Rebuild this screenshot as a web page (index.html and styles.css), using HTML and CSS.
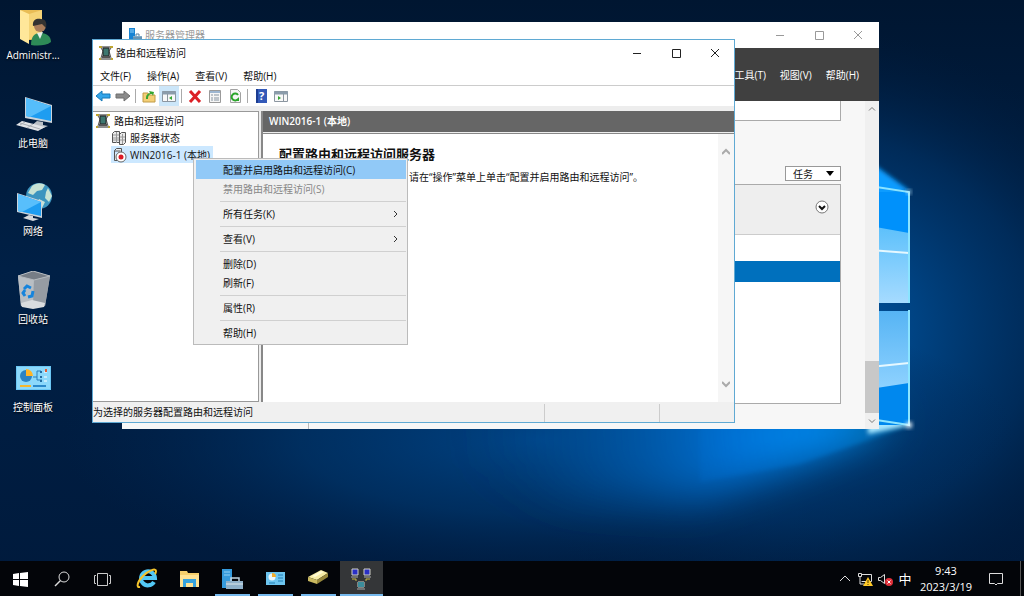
FILE: index.html
```html
<!DOCTYPE html>
<html lang="zh-CN">
<head>
  <meta charset="utf-8">
  <title>路由和远程访问</title>
  <link rel="stylesheet" href="styles.css">
</head>
<body>
  <svg class="wallpaper" viewBox="0 0 1024 596" preserveAspectRatio="xMidYMid slice" aria-hidden="true">
    <defs>
      <linearGradient id="sky" x1="0" y1="0" x2="0" y2="1">
        <stop offset="0" stop-color="#001631"/>
        <stop offset=".45" stop-color="#002046"/>
        <stop offset="1" stop-color="#001a3c"/>
      </linearGradient>
      <radialGradient id="glow" gradientUnits="userSpaceOnUse" cx="800" cy="330" r="360" gradientTransform="translate(0 50) scale(1 .84)">
        <stop offset="0" stop-color="#005cae"/>
        <stop offset=".35" stop-color="#00417f"/>
        <stop offset=".65" stop-color="#003062" stop-opacity=".75"/>
        <stop offset="1" stop-color="#001c3e" stop-opacity="0"/>
      </radialGradient>
      <radialGradient id="haze" cx=".5" cy=".5" r=".5">
        <stop offset="0" stop-color="#00478c" stop-opacity=".9"/>
        <stop offset=".5" stop-color="#003870" stop-opacity=".65"/>
        <stop offset="1" stop-color="#002450" stop-opacity="0"/>
      </radialGradient>
      <radialGradient id="beam" gradientUnits="userSpaceOnUse" cx="905" cy="424" r="440">
        <stop offset="0" stop-color="#10b4ff"/>
        <stop offset=".16" stop-color="#0092fa"/>
        <stop offset=".4" stop-color="#0078e0" stop-opacity=".85"/>
        <stop offset=".7" stop-color="#005cae" stop-opacity=".5"/>
        <stop offset="1" stop-color="#00407c" stop-opacity="0"/>
      </radialGradient>
      <linearGradient id="paneTop" x1="0" y1="0" x2="0" y2="1">
        <stop offset="0" stop-color="#5cc0fb"/>
        <stop offset="1" stop-color="#a6dbff"/>
      </linearGradient>
      <linearGradient id="paneLow" x1="0" y1="0" x2="0" y2="1">
        <stop offset="0" stop-color="#56b4f4"/>
        <stop offset="1" stop-color="#8fd2ff"/>
      </linearGradient>
      <filter id="soft" x="-20%" y="-40%" width="140%" height="180%"><feGaussianBlur stdDeviation="20"/></filter>
      <filter id="fine" x="-50%" y="-50%" width="200%" height="200%"><feGaussianBlur stdDeviation="2"/></filter>
    </defs>
    <rect width="1024" height="596" fill="url(#sky)"/>
    <rect width="1024" height="596" fill="url(#glow)"/>
    <ellipse cx="540" cy="440" rx="480" ry="150" fill="url(#haze)"/>
    <path d="M895 420L800 462L700 500L560 500L420 440L440 400L640 380Z" fill="url(#beam)" filter="url(#soft)"/>
    <path d="M912 425L800 464L700 482L700 415Z" fill="url(#beam)" filter="url(#fine)" opacity=".3"/>
    <path d="M910 191L868 160V202Z" fill="#0a9cff" filter="url(#fine)"/>
    <path d="M911 425L868 434V414Z" fill="#a6e6ff" filter="url(#fine)"/>
    <path d="M870 192H909V303H870Z" fill="#0091fb"/>
    <path d="M870 226L909 233V303H870Z" fill="url(#paneTop)"/>
    <path d="M870 250L909 253" stroke="#e6f8ff" stroke-width="2"/>
    <path d="M870 311H909V425H870Z" fill="#0088ee"/>
    <path d="M870 311H909V383L870 389Z" fill="url(#paneLow)"/>
    <path d="M870 367L909 363" stroke="#e6f8ff" stroke-width="2"/>
    <path d="M870 186L909 192V303M909 310V425L870 419" fill="none" stroke="#8be4ff" stroke-width="2"/>
    <circle cx="909" cy="192" r="2" fill="#dff8ff" filter="url(#fine)"/>
    <circle cx="909" cy="425" r="3" fill="#fff" filter="url(#fine)"/>
  </svg>

  <main class="desktop">
    <nav class="shortcuts">
      <a class="shortcut" href="#admin">
        <svg viewBox="0 0 40 40">
          <path d="M7 3h22v30H12z" fill="#e9bd55"/><path d="M7 3l9 4v30l-9-5z" fill="#ffe79a"/><path d="M16 7l13-4v29H16z" fill="#f5d477"/>
          <path d="M18 38c0-8 3-12 9-12s11 3 11 9c-5 4-14 4-20 3z" fill="#2e8b57"/><path d="M24 26l3 6 3-7z" fill="#e6efe9"/>
          <circle cx="27" cy="19" r="6" fill="#a97d5b"/><path d="M20 19c-1-7 5-8 8-7 5 0 6 4 5 9l-4-4z" fill="#343331"/>
        </svg>
        <span>Administr...</span>
      </a>
      <a class="shortcut" href="#computer">
        <svg viewBox="0 0 40 40">
          <path d="M12 2l27 8v18l-27-5z" fill="#cbd3da"/><path d="M13 3l25 8v15l-25-5z" fill="#1e9df1"/><path d="M13 3l25 8-21 11-4-1z" fill="#55bdfb"/>
          <path d="M24 26l6 1v3l5 1-7 3-10-3z" fill="#b9bfc5"/><path d="M9 26l23 6-7 4-22-6z" fill="#e1e4e7"/><path d="M7 28l20 6M12 27l-5 3M20 29l-6 4" stroke="#a9aeb3"/>
        </svg>
        <span>此电脑</span>
      </a>
      <a class="shortcut" href="#network">
        <svg viewBox="0 0 40 40">
          <circle cx="26" cy="13" r="13" fill="#3c94bf"/><path d="M19 3c5-4 10-3 13-1l-3 5-5 1-4 4-5-2zM35 5l4 8-3 6-4-4 1-6zM26 16l6 3-3 6-6-2z" fill="#c8e3d5"/>
          <path d="M4 10l25 8v17L4 29z" fill="#cbd3da"/><path d="M5 11l23 8v14L5 28z" fill="#1e9df1"/><path d="M5 11l23 8L9 29l-4-1z" fill="#58bffc"/>
          <path d="M16 32l4 1v2l6 1-6 2-10-3z" fill="#d5d8db"/>
        </svg>
        <span>网络</span>
      </a>
      <a class="shortcut" href="#bin">
        <svg viewBox="0 0 40 40">
          <path d="M5 5L20 0l17 5-5 30-12 2-12-2z" fill="#a7adb3"/><path d="M5 5l16 4-1 28-12-2z" fill="#b9bec3"/><path d="M37 5L21 9l-1 28 12-2z" fill="#969ca3"/>
          <path d="M5 5l15-5 17 5-16 4z" fill="#767d86" stroke="#b5babf"/><path d="M8 32l11-3 13 3-1 4-11 2-11-2z" fill="#dadddf"/>
          <path d="M11 18l3-3 4 2M20 20l-1 5-4 1M12 25l-2-3 2-3" fill="none" stroke="#1684dc" stroke-width="3"/>
        </svg>
        <span>回收站</span>
      </a>
      <a class="shortcut" href="#control">
        <svg viewBox="0 0 40 40">
          <path d="M3 7h35v24H3z" fill="#6bc7f5"/><path d="M4 8h33v22H4z" fill="#8cd9fb"/><circle cx="13" cy="17" r="6" fill="#2b83c4"/>
          <path d="M13 17v-7a7 7 0 0 1 7 7z" fill="#ffb527"/><path d="M20 18h4v-6h4M24 18v3h5" fill="none" stroke="#2b7fb8"/>
          <path d="M27 12h2v2h-2zM27 17h2v2h-2zM27 21h2v2h-2z" fill="#236da2"/><path d="M31 13h3M31 18h3M31 22h3" stroke="#fff"/><path d="M32 10h2v3h-2z" fill="#e65c35"/>
          <path d="M7 27h11" stroke="#f5b72e" stroke-width="2"/><path d="M20 27h13" stroke="#2c8acb" stroke-width="2"/>
        </svg>
        <span>控制面板</span>
      </a>
    </nav>

    <section class="window manager">
      <header class="titlebar">
        <svg class="icon" viewBox="0 0 16 16"><path d="M2 1h6v12H2z" fill="#1783d3"/><path d="M3 3h4M3 5h4" stroke="#8fd0fa"/><path d="M6 9h9v5H6z" fill="#7daac9"/><path d="M9 9V7h3v2M6 11h9" fill="none" stroke="#547f9d"/></svg>
        <h2>服务器管理器</h2>
        <div class="controls">
          <button aria-label="最小化"><svg viewBox="0 0 10 10"><path d="M1 5.500h8"/></svg></button>
          <button aria-label="最大化"><svg viewBox="0 0 10 10"><path d="M1.500 1.500h8v8h-8z"/></svg></button>
          <button aria-label="关闭"><svg viewBox="0 0 10 10"><path d="M1 1l8 8M9 1l-8 8"/></svg></button>
        </div>
      </header>
      <nav class="manager-menu">
        <button>工具(T)</button>
        <button>视图(V)</button>
        <button>帮助(H)</button>
      </nav>
      <div class="manager-body">
        <aside class="manager-nav"></aside>
        <div class="manager-main">
          <div class="card-end"></div>
          <button class="tasks">任务<svg viewBox="0 0 8 5"><path d="M0 0h8L4 5z"/></svg></button>
          <div class="grid-panel">
            <div class="filter">
              <button class="expand" aria-label="展开"><svg viewBox="0 0 14 14"><circle cx="7" cy="7" r="6"/><path d="M4 6l3 3 3-3"/></svg></button>
            </div>
            <div class="row"></div>
            <div class="row selected"></div>
          </div>
        </div>
        <div class="scrollbar">
          <svg viewBox="0 0 8 8"><path d="M1 5.500l3-3 3 3"/></svg>
          <span class="thumb"></span>
          <svg viewBox="0 0 8 8"><path d="M1 2.500l3 3 3-3"/></svg>
        </div>
      </div>
    </section>

    <section class="window console">
      <header class="titlebar">
        <svg class="icon" viewBox="0 0 16 16"><path d="M2 2h12M2 14h12" stroke="#222"/><path d="M3 3l2 3-2 7M13 3l-2 3 2 7" fill="none" stroke="#555"/><path d="M5 3h6v8H5z" fill="#3d7770" stroke="#222"/><path d="M1 2h3M12 2h3M1 14h2M13 14h2" stroke="#bda531" stroke-width="2"/><path d="M4 12h8" stroke="#555" stroke-width="2"/></svg>
        <h1>路由和远程访问</h1>
        <div class="controls">
          <button aria-label="最小化"><svg viewBox="0 0 10 10"><path d="M1 5.500h8"/></svg></button>
          <button aria-label="最大化"><svg viewBox="0 0 10 10"><path d="M1.500 1.500h8v8h-8z"/></svg></button>
          <button aria-label="关闭"><svg viewBox="0 0 10 10"><path d="M1 1l8 8M9 1l-8 8"/></svg></button>
        </div>
      </header>
      <nav class="menubar">
        <button>文件(F)</button>
        <button>操作(A)</button>
        <button>查看(V)</button>
        <button>帮助(H)</button>
      </nav>
      <div class="toolbar">
        <button aria-label="后退"><svg viewBox="0 0 16 16"><path d="M1 8l6-5v3h8v4H7v3z" fill="#32a5ea" stroke="#1479b8"/></svg></button>
        <button aria-label="前进"><svg viewBox="0 0 16 16"><path d="M15 8L9 3v3H1v4h8v3z" fill="#8b8b8b" stroke="#6f6f6f"/></svg></button>
        <i class="divider"></i>
        <button aria-label="上一级"><svg viewBox="0 0 16 16"><path d="M2 5h5l1 2h6v7H2z" fill="#f4cf76" stroke="#c09b49"/><path d="M5 11c0-4 1-5 4-6L8 3l5 1-1 4-1-2c-3 0-4 2-4 5z" fill="#36a632"/></svg></button>
        <button class="on" aria-label="显示控制台树"><svg viewBox="0 0 16 16"><path d="M1.500 3.500h13v10h-13z" fill="#f8f8f8" stroke="#8c96a0"/><path d="M1 5h14" stroke="#8b9cab" stroke-width="3"/><path d="M6.500 6v8" stroke="#8c96a0"/><path d="M11 8v4L8 10z" fill="#36a632"/></svg></button>
        <i class="divider"></i>
        <button aria-label="删除"><svg viewBox="0 0 16 16"><path d="M3 3l10 11M13 3L3 14" stroke="#dc1f25" stroke-width="3"/></svg></button>
        <button aria-label="属性"><svg viewBox="0 0 16 16"><path d="M2.500 2.500h11v12h-11z" fill="#f5f5f5" stroke="#9a9a9a"/><path d="M3 4h10" stroke="#9db6d1" stroke-width="2"/><path d="M4 7h2M4 10h2M4 12h2M7 7h5M7 10h5M7 12h5" stroke="#8693a0"/></svg></button>
        <button aria-label="刷新"><svg viewBox="0 0 16 16"><path d="M3.500 1.500h7l3 3v10h-10z" fill="#f5f5f5" stroke="#a2a2a2"/><path d="M11 7a3.500 3.500 0 1 0 0 4" fill="none" stroke="#2ba52b" stroke-width="2"/><path d="M12 9v4H8z" fill="#2ba52b"/></svg></button>
        <i class="divider"></i>
        <button aria-label="帮助"><svg viewBox="0 0 16 16"><path d="M3 1h11v14H3z" fill="#3359b8"/><path d="M3 1h2v14H3z" fill="#1c3d91"/><text x="6" y="12" class="mark">?</text></svg></button>
        <button aria-label="显示操作窗格"><svg viewBox="0 0 16 16"><path d="M1.500 3.500h13v10h-13z" fill="#f8f8f8" stroke="#8c96a0"/><path d="M1 5h14" stroke="#8b9cab" stroke-width="3"/><path d="M10.500 6v8" stroke="#8c96a0"/><path d="M5 8v4l3-2z" fill="#36a632"/></svg></button>
      </div>
      <div class="panes">
        <ul class="tree">
          <li><button><svg class="icon" viewBox="0 0 16 16"><path d="M2 2h12M2 14h12" stroke="#222"/><path d="M3 3l2 3-2 7M13 3l-2 3 2 7" fill="none" stroke="#555"/><path d="M5 3h6v8H5z" fill="#3d7770" stroke="#222"/><path d="M1 2h3M12 2h3M1 14h2M13 14h2" stroke="#bda531" stroke-width="2"/><path d="M4 12h8" stroke="#555" stroke-width="2"/></svg>路由和远程访问</button>
            <ul>
              <li><button><svg class="icon" viewBox="0 0 16 16"><path d="M1.500 3.500l2-2h5v11h-7zM8.500 4.500l2-2h4v10l-2 2h-4z" fill="#e9e9e9" stroke="#555"/><path d="M2 5h6M2 8h6M2 10h6M9 7h5M9 10h5M5.500 2v11M11.500 4v10" stroke="#999"/></svg>服务器状态</button></li>
              <li><button class="current"><svg class="icon" viewBox="0 0 16 16"><path d="M3.500 3.500l2-2h5v4M3.500 3.500v10h3M3.500 4h6" fill="#eee" stroke="#555"/><circle cx="10" cy="10" r="5" fill="#fff" stroke="#666"/><circle cx="10" cy="10" r="2.500" fill="#dc1b25"/></svg>WIN2016-1 (本地)</button></li>
            </ul>
          </li>
        </ul>
        <article class="details">
          <h2 class="details-title">WIN2016-1 (本地)</h2>
          <div class="details-body">
            <div class="details-text">
              <h3>配置路由和远程访问服务器</h3>
              <p>若需要设置路由和远程访问，请在“操作”菜单上单击“配置并启用路由和远程访问”。</p>
            </div>
            <div class="scrollbar">
              <svg viewBox="0 0 8 8"><path d="M0 6l4-4 4 4"/></svg>
              <svg viewBox="0 0 8 8"><path d="M0 2l4 4 4-4"/></svg>
            </div>
          </div>
        </article>
      </div>
      <footer class="statusbar">
        <span>为选择的服务器配置路由和远程访问</span>
        <i></i>
        <i></i>
      </footer>
    </section>

    <div class="context-menu" role="menu">
      <button class="hover" role="menuitem">配置并启用路由和远程访问(C)</button>
      <button role="menuitem" disabled>禁用路由和远程访问(S)</button>
      <hr>
      <button role="menuitem">所有任务(K)<svg viewBox="0 0 8 8"><path d="M2 1l3 3-3 3"/></svg></button>
      <hr>
      <button role="menuitem">查看(V)<svg viewBox="0 0 8 8"><path d="M2 1l3 3-3 3"/></svg></button>
      <hr>
      <button role="menuitem">删除(D)</button>
      <button role="menuitem">刷新(F)</button>
      <hr>
      <button role="menuitem">属性(R)</button>
      <hr>
      <button role="menuitem">帮助(H)</button>
    </div>
  </main>

  <footer class="taskbar">
    <div class="system">
      <button aria-label="开始"><svg viewBox="0 0 24 24"><path d="M4 7l6-1v6H4zM11 6l8-1v7h-8zM4 13h6v6l-6-1zM11 13h8v7l-8-1z" fill="#fff"/></svg></button>
      <button aria-label="搜索"><svg viewBox="0 0 24 24"><circle cx="14" cy="10" r="5" fill="none" stroke="#ddd"/><path d="M10.500 13.500L5 19" stroke="#ddd" stroke-width="1.500"/></svg></button>
      <button aria-label="任务视图"><svg viewBox="0 0 24 24"><path d="M6.500 6.500h10v12h-10zM5 8.500H3.500v8H5M18 8.500h1.500v8H18" fill="none" stroke="#ccc"/></svg></button>
    </div>
    <div class="apps">
      <button aria-label="Internet Explorer"><svg viewBox="0 0 24 24"><path d="M19 15a7 7 0 1 1 1-4H8" fill="none" stroke="#52c8f5" stroke-width="4"/><path d="M5 20c-4 1-3-5 3-11C14 3 21 1 21 4c0 1 0 2-1 3" fill="none" stroke="#f5c42c" stroke-width="2"/></svg></button>
      <button aria-label="文件资源管理器"><svg viewBox="0 0 24 24"><path d="M2 4h7l1 2h11v14H2z" fill="#f5cf6c"/><path d="M2 8h19v12H2z" fill="#ffe394"/><path d="M5 20v-8h13v8h-3v-4H8v4z" fill="#36a3dd"/></svg></button>
      <button class="open" aria-label="服务器管理器"><svg viewBox="0 0 24 24"><path d="M1 2h10v19H1z" fill="#359bdd"/><path d="M3 5h6M3 8h6" stroke="#94d3f7"/><path d="M5 14h17v8H5z" fill="#8eb0c9"/><path d="M10 14v-3h8v3M5 17h17" fill="none" stroke="#c3d5e0" stroke-width="1.500"/></svg></button>
      <button class="open" aria-label="控制面板"><svg viewBox="0 0 24 24"><path d="M2 5h19v13H2z" fill="#6dc5ef"/><circle cx="8" cy="10" r="3.500" fill="#eaf7fc"/><path d="M8 10V6a4 4 0 0 1 4 4z" fill="#f2ac2a"/><path d="M14 8h5M14 11h5M14 14h5M5 16h6" stroke="#237fb5"/></svg></button>
      <button class="open" aria-label="磁盘"><svg viewBox="0 0 24 24"><path d="M1 10l13-7 7 3-11 7z" fill="#f6eca5"/><path d="M1 10l9 3v4l-9-3z" fill="#c9b960"/><path d="M10 13l11-7v4l-11 7z" fill="#97883c"/><path d="M5 9l9-5 3 1-9 5z" fill="#fffbd4"/></svg></button>
      <button class="open active" aria-label="路由和远程访问"><svg viewBox="0 0 24 24"><path d="M2 2h6v6H2zM14 2h6v6h-6zM8 15h6v5H8z" fill="#2a30c5" stroke="#d0d0c5"/><path d="M8 15h6v5H8z" fill="#3c8d9b"/><path d="M1 10h7M14 10h7M7 22h8" stroke="#aaa"/><path d="M2 12h4v2M20 12h-4v2" fill="none" stroke="#cbbb48"/></svg></button>
    </div>
    <div class="tray">
      <button aria-label="显示隐藏的图标"><svg viewBox="0 0 16 16"><path d="M3 10l5-5 5 5" fill="none" stroke="#ddd"/></svg></button>
      <button aria-label="网络"><svg viewBox="0 0 16 16"><path d="M4.500 3.500h10v7h-10M1.500 2.500h3v3h-3zM3 5v8M3 13h4" fill="none" stroke="#ddd"/><path d="M11 6l5 9H6z" fill="#ffc928"/><path d="M11 9v3M11 13v1" stroke="#4b3a00"/></svg></button>
      <button aria-label="音量"><svg viewBox="0 0 16 16"><path d="M1.500 6.500h2l4-3v9l-4-3h-2z" fill="none" stroke="#ddd"/><circle cx="12" cy="11" r="4" fill="#e0303a"/><path d="M10.500 9.500l3 3M13.500 9.500l-3 3" stroke="#fff"/></svg></button>
      <button class="ime">中</button>
      <button class="clock"><time>9:43</time><time>2023/3/19</time></button>
      <button class="notices" aria-label="通知"><svg viewBox="0 0 16 16"><path d="M1.500 2.500h13v10h-5L8 14l-1.500-1.500h-5z" fill="none" stroke="#ddd"/></svg></button>
    </div>
  </footer>
</body>
</html>
```
FILE: styles.css
```css
*{
  box-sizing: border-box;
}
body{
  margin: 0;
  min-height: 100vh;
  display: flex;
  flex-direction: column;
  overflow: hidden;
  background-color: #001a3a;
  color: #111;
  font: 10px/16px "Open Sans", "Noto Sans CJK SC", sans-serif;
}
button{
  margin: 0;
  padding: 0;
  border: 0;
  background: none;
  color: inherit;
  font: inherit;
}
h1, h2, h3, p, ul{
  margin: 0;
  padding: 0;
  font-size: 10px;
  font-weight: normal;
  list-style: none;
}
svg{
  display: block;
  flex: none;
}
.icon{
  width: 16px;
  height: 16px;
}
.wallpaper{
  position: absolute;
  z-index: -1;
  width: 100%;
  height: 100%;
}
.desktop{
  position: relative;
  flex: 1;
}

/* desktop shortcuts */
.shortcuts{
  display: flex;
  flex-direction: column;
  gap: 32px;
  width: 66px;
  padding-top: 7px;
}
.shortcut{
  display: flex;
  flex-direction: column;
  align-items: center;
  color: #fff;
  text-decoration: none;
  white-space: nowrap;
  text-shadow: 0 1px 2px #000;
}
.shortcut svg{
  width: 40px;
  height: 40px;
}

/* windows */
.window{
  position: absolute;
  display: flex;
  flex-direction: column;
  background-color: #fff;
}
.manager{
  left: 122px;
  right: 145px;
  top: 22px;
  bottom: 132px;
}
.console{
  left: 92px;
  right: 289px;
  top: 39px;
  bottom: 138px;
  border: 1px solid #5fa9d3;
}
.titlebar{
  display: flex;
  align-items: center;
  gap: 2px;
  height: 26px;
  padding-left: 5px;
}
.controls{
  display: flex;
  margin-left: auto;
}
.controls button{
  width: 39px;
  height: 24px;
  display: grid;
  place-items: center;
}
.controls svg{
  width: 10px;
  height: 10px;
  fill: none;
  stroke: #222;
}
.manager .titlebar{
  padding-right: 2px;
  color: #999;
}
.manager .controls svg{
  stroke: #999;
}
.scrollbar{
  display: flex;
  flex-direction: column;
  justify-content: space-between;
  align-items: center;
  width: 14px;
  background-color: #f0f0f0;
}
.scrollbar svg{
  width: 8px;
  height: 16px;
  fill: none;
  stroke: #777;
}

/* server manager */
.manager-menu{
  display: flex;
  justify-content: flex-end;
  align-items: center;
  gap: 14px;
  height: 53px;
  padding-right: 20px;
  background-color: #404040;
  color: #fff;
}
.manager-body{
  flex: 1;
  display: flex;
  background-color: #f7f7f7;
}
.manager-nav{
  width: 187px;
  border-right: 1px solid #bbb;
}
.manager-main{
  flex: 1;
  display: flex;
  flex-direction: column;
  padding: 0 24px 25px;
}
.card-end{
  height: 20px;
  margin-bottom: 45px;
  border: 1px solid #aaa;
  border-top: 0;
  background-color: #fff;
}
.tasks{
  align-self: flex-end;
  display: flex;
  align-items: center;
  justify-content: space-between;
  width: 56px;
  height: 15px;
  margin-bottom: 3px;
  padding: 0 6px 0 7px;
  border: 1px solid #999;
  background-color: #fff;
}
.tasks svg{
  width: 8px;
  height: 5px;
}
.grid-panel{
  flex: 1;
  border: 1px solid #aaa;
  background-color: #fff;
}
.filter{
  display: flex;
  justify-content: flex-end;
  height: 50px;
  padding: 15px 11px;
  border-bottom: 1px solid #ccc;
  background-color: #eee;
}
.expand{
  width: 14px;
  height: 14px;
}
.expand circle{
  fill: #fff;
  stroke: #777;
}
.expand path{
  fill: none;
  stroke: #111;
  stroke-width: 2;
}
.row{
  height: 26px;
}
.row.selected{
  height: 21px;
  background-color: #0070bd;
}
.manager .scrollbar{
  justify-content: flex-start;
}
.manager .thumb{
  width: 100%;
  height: 52px;
  margin-top: auto;
  background-color: #c8c8c8;
}

/* routing console */
.menubar{
  display: flex;
  gap: 16px;
  height: 20px;
  padding-left: 7px;
  border-bottom: 1px solid #ccc;
}
.toolbar{
  display: flex;
  align-items: center;
  height: 20px;
}
.toolbar button{
  width: 20px;
  height: 20px;
  display: grid;
  place-items: center;
}
.toolbar svg{
  width: 16px;
  height: 16px;
}
.toolbar .on{
  background-color: #cce6f9;
}
.toolbar .divider{
  width: 1px;
  height: 14px;
  margin: 0 3px 0 2px;
  background-color: #aaa;
}
.mark{
  fill: #fff;
  font-size: 11px;
  font-weight: bold;
}
.panes{
  flex: 1;
  display: flex;
  gap: 2px;
  padding-top: 5px;
  background-color: #ededed;
}
.tree{
  width: 166px;
  border: 1px solid #999;
  border-left: 0;
  background-color: #fff;
}
.tree ul{
  padding-left: 16px;
}
.tree button{
  display: flex;
  align-items: center;
  gap: 3px;
  height: 17px;
  margin-left: 2px;
  padding-right: 3px;
  white-space: nowrap;
}
.tree .current{
  background-color: #cce8ff;
}
.details{
  flex: 1;
  display: flex;
  flex-direction: column;
  border-left: 2px solid #888;
}
.details-title{
  height: 21px;
  padding-left: 6px;
  background-color: #666;
  color: #fff;
  font-weight: 600;
  line-height: 20px;
}
.details-body{
  flex: 1;
  display: flex;
  margin-top: 1px;
  border-top: 1px solid #888;
  background-color: #fff;
}
.details-text{
  flex: 1;
  padding: 11px 16px;
}
.details-text h3{
  margin-bottom: 6px;
  font-size: 13px;
  font-weight: bold;
  line-height: 18px;
}
.details-body .scrollbar{
  width: 16px;
  padding: 10px 0;
  background-color: #f6f6f6;
}
.details-body .scrollbar svg{
  stroke: #aaa;
  stroke-width: 2;
}
.statusbar{
  display: flex;
  height: 20px;
  padding-top: 2px;
  background-color: #f0f0f0;
}
.statusbar span{
  flex: 1;
}
.statusbar i{
  width: 115px;
  border-left: 1px solid #ccc;
}
.statusbar i:last-child{
  width: 75px;
}

/* context menu over both panes */
.context-menu{
  position: absolute;
  left: 193px;
  top: 158px;
  width: 215px;
  padding: 1px 1px 2px 2px;
  border: 1px solid #bbb;
  background-color: #f0f0f0;
}
.context-menu button{
  display: flex;
  align-items: center;
  justify-content: space-between;
  width: 100%;
  height: 19px;
  padding: 0 6px 0 27px;
}
.context-menu .hover{
  background-color: #91c9f7;
}
.context-menu button:disabled{
  color: #888;
}
.context-menu svg{
  width: 8px;
  height: 8px;
  fill: none;
  stroke: #333;
}
.context-menu hr{
  height: 1px;
  margin: 3px 0 2px 24px;
  border: 0;
  background-color: #d0d0d0;
}

/* taskbar */
.taskbar{
  display: flex;
  height: 35px;
  background-color: #030509;
  color: #fff;
}
.system, .apps, .tray{
  display: flex;
}
.system button{
  width: 41px;
}
.apps{
  margin-left: 2px;
}
.apps button{
  width: 43px;
}
.taskbar button{
  display: flex;
  flex-direction: column;
  align-items: center;
  justify-content: center;
}
.taskbar svg{
  width: 24px;
  height: 24px;
}
.apps .open{
  background: linear-gradient(#76b9ed, #76b9ed) center bottom / 35px 2px no-repeat;
}
.apps .active{
  background-color: #343638;
  background-size: 100% 2px;
}
.tray{
  margin-left: auto;
  padding-right: 3px;
}
.tray button{
  width: 20px;
}
.tray svg{
  width: 16px;
  height: 16px;
}
.tray .ime{
  font-size: 13px;
}
.tray .clock{
  width: 62px;
  font-size: 11px;
}
.tray .notices{
  width: 44px;
  padding-right: 6px;
  border-right: 1px solid #555;
}
```
